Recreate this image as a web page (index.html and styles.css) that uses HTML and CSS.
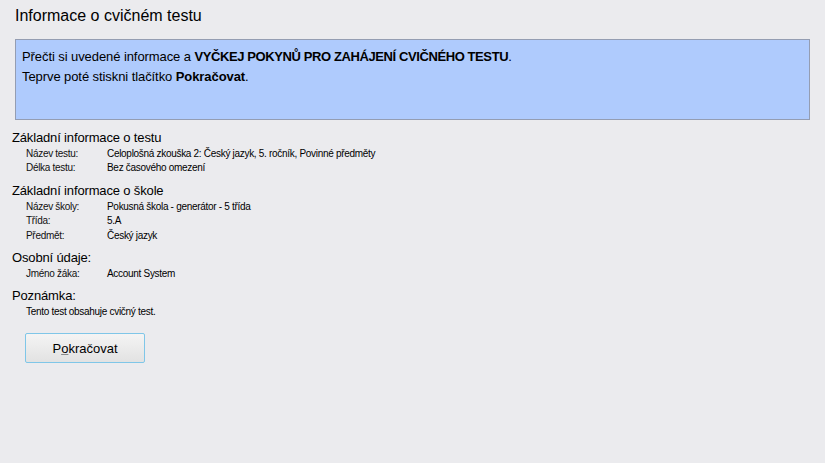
FILE: index.html
```html
<!DOCTYPE html>
<html lang="cs">
<head>
    <meta charset="UTF-8">
    <title>Informace o cvičném testu</title>
    <link rel="stylesheet" href="styles.css">
</head>
<body>
    <h1 class="page-title">Informace o cvičném testu</h1>

    <div class="notice">
        <p>Přečti si uvedené informace a <b class="caps">VYČKEJ POKYNŮ PRO ZAHÁJENÍ CVIČNÉHO TESTU</b>.</p>
        <p>Teprve poté stiskni tlačítko <b>Pokračovat</b>.</p>
    </div>

    <div class="section">
        <h2>Základní informace o testu</h2>
        <div class="rows">
            <span class="label">Název testu:</span><span>Celoplošná zkouška 2: Český jazyk, 5. ročník, Povinné předměty</span>
            <span class="label">Délka testu:</span><span>Bez časového omezení</span>
        </div>
    </div>

    <div class="section">
        <h2>Základní informace o škole</h2>
        <div class="rows">
            <span class="label">Název školy:</span><span>Pokusná škola - generátor - 5 třída</span>
            <span class="label">Třída:</span><span>5.A</span>
            <span class="label">Předmět:</span><span>Český jazyk</span>
        </div>
    </div>

    <div class="section">
        <h2>Osobní údaje:</h2>
        <div class="rows">
            <span class="label">Jméno žáka:</span><span>Account System</span>
        </div>
    </div>

    <div class="section">
        <h2>Poznámka:</h2>
        <p class="note">Tento test obsahuje cvičný test.</p>
    </div>

    <button class="btn">P<u>o</u>kračovat</button>
</body>
</html>
```

FILE: styles.css
```css
body {
    background-color: #ebebee;
    font-family: 'Liberation Sans', Arial, sans-serif;
    color: #000;
    margin: 0;
    padding: 0 15px;
}
.page-title {
    font-size: 16px;
    font-weight: normal;
    line-height: 20px;
    margin: 6px 0 13px 0;
}
.notice {
    background-color: #afcbfd;
    border: 1px solid #949db2;
    height: 65px;
    padding: 7px 6px 7px 6px;
    margin-bottom: 9px;
}
.notice p {
    font-size: 13px;
    letter-spacing: -0.08px;
    line-height: 20px;
    margin: 0;
}
.notice .caps {
    letter-spacing: -0.4px;
}
.section {
    margin: 0 0 6px -3px;
}
.section h2 {
    font-size: 13px;
    letter-spacing: -0.15px;
    font-weight: normal;
    line-height: 18px;
    margin: 0;
}
.rows {
    display: grid;
    grid-template-columns: 81px 1fr;
    font-size: 10px;
    letter-spacing: -0.3px;
    line-height: 14.4px;
    padding-left: 14px;
}
.rows .label {
    color: #111;
}
.note {
    font-size: 10px;
    letter-spacing: -0.3px;
    line-height: 14px;
    margin: 0;
    padding-left: 14px;
}
.btn {
    display: block;
    width: 120px;
    height: 30px;
    margin: 14px 0 0 10px;
    font-family: 'Liberation Sans', Arial, sans-serif;
    font-size: 13px;
    color: #000;
    background: linear-gradient(#f4f4f4, #e2e2e2);
    border: 1px solid #7fc6e8;
    border-radius: 2px;
}
.btn u {
    text-decoration-color: #888;
}
```
